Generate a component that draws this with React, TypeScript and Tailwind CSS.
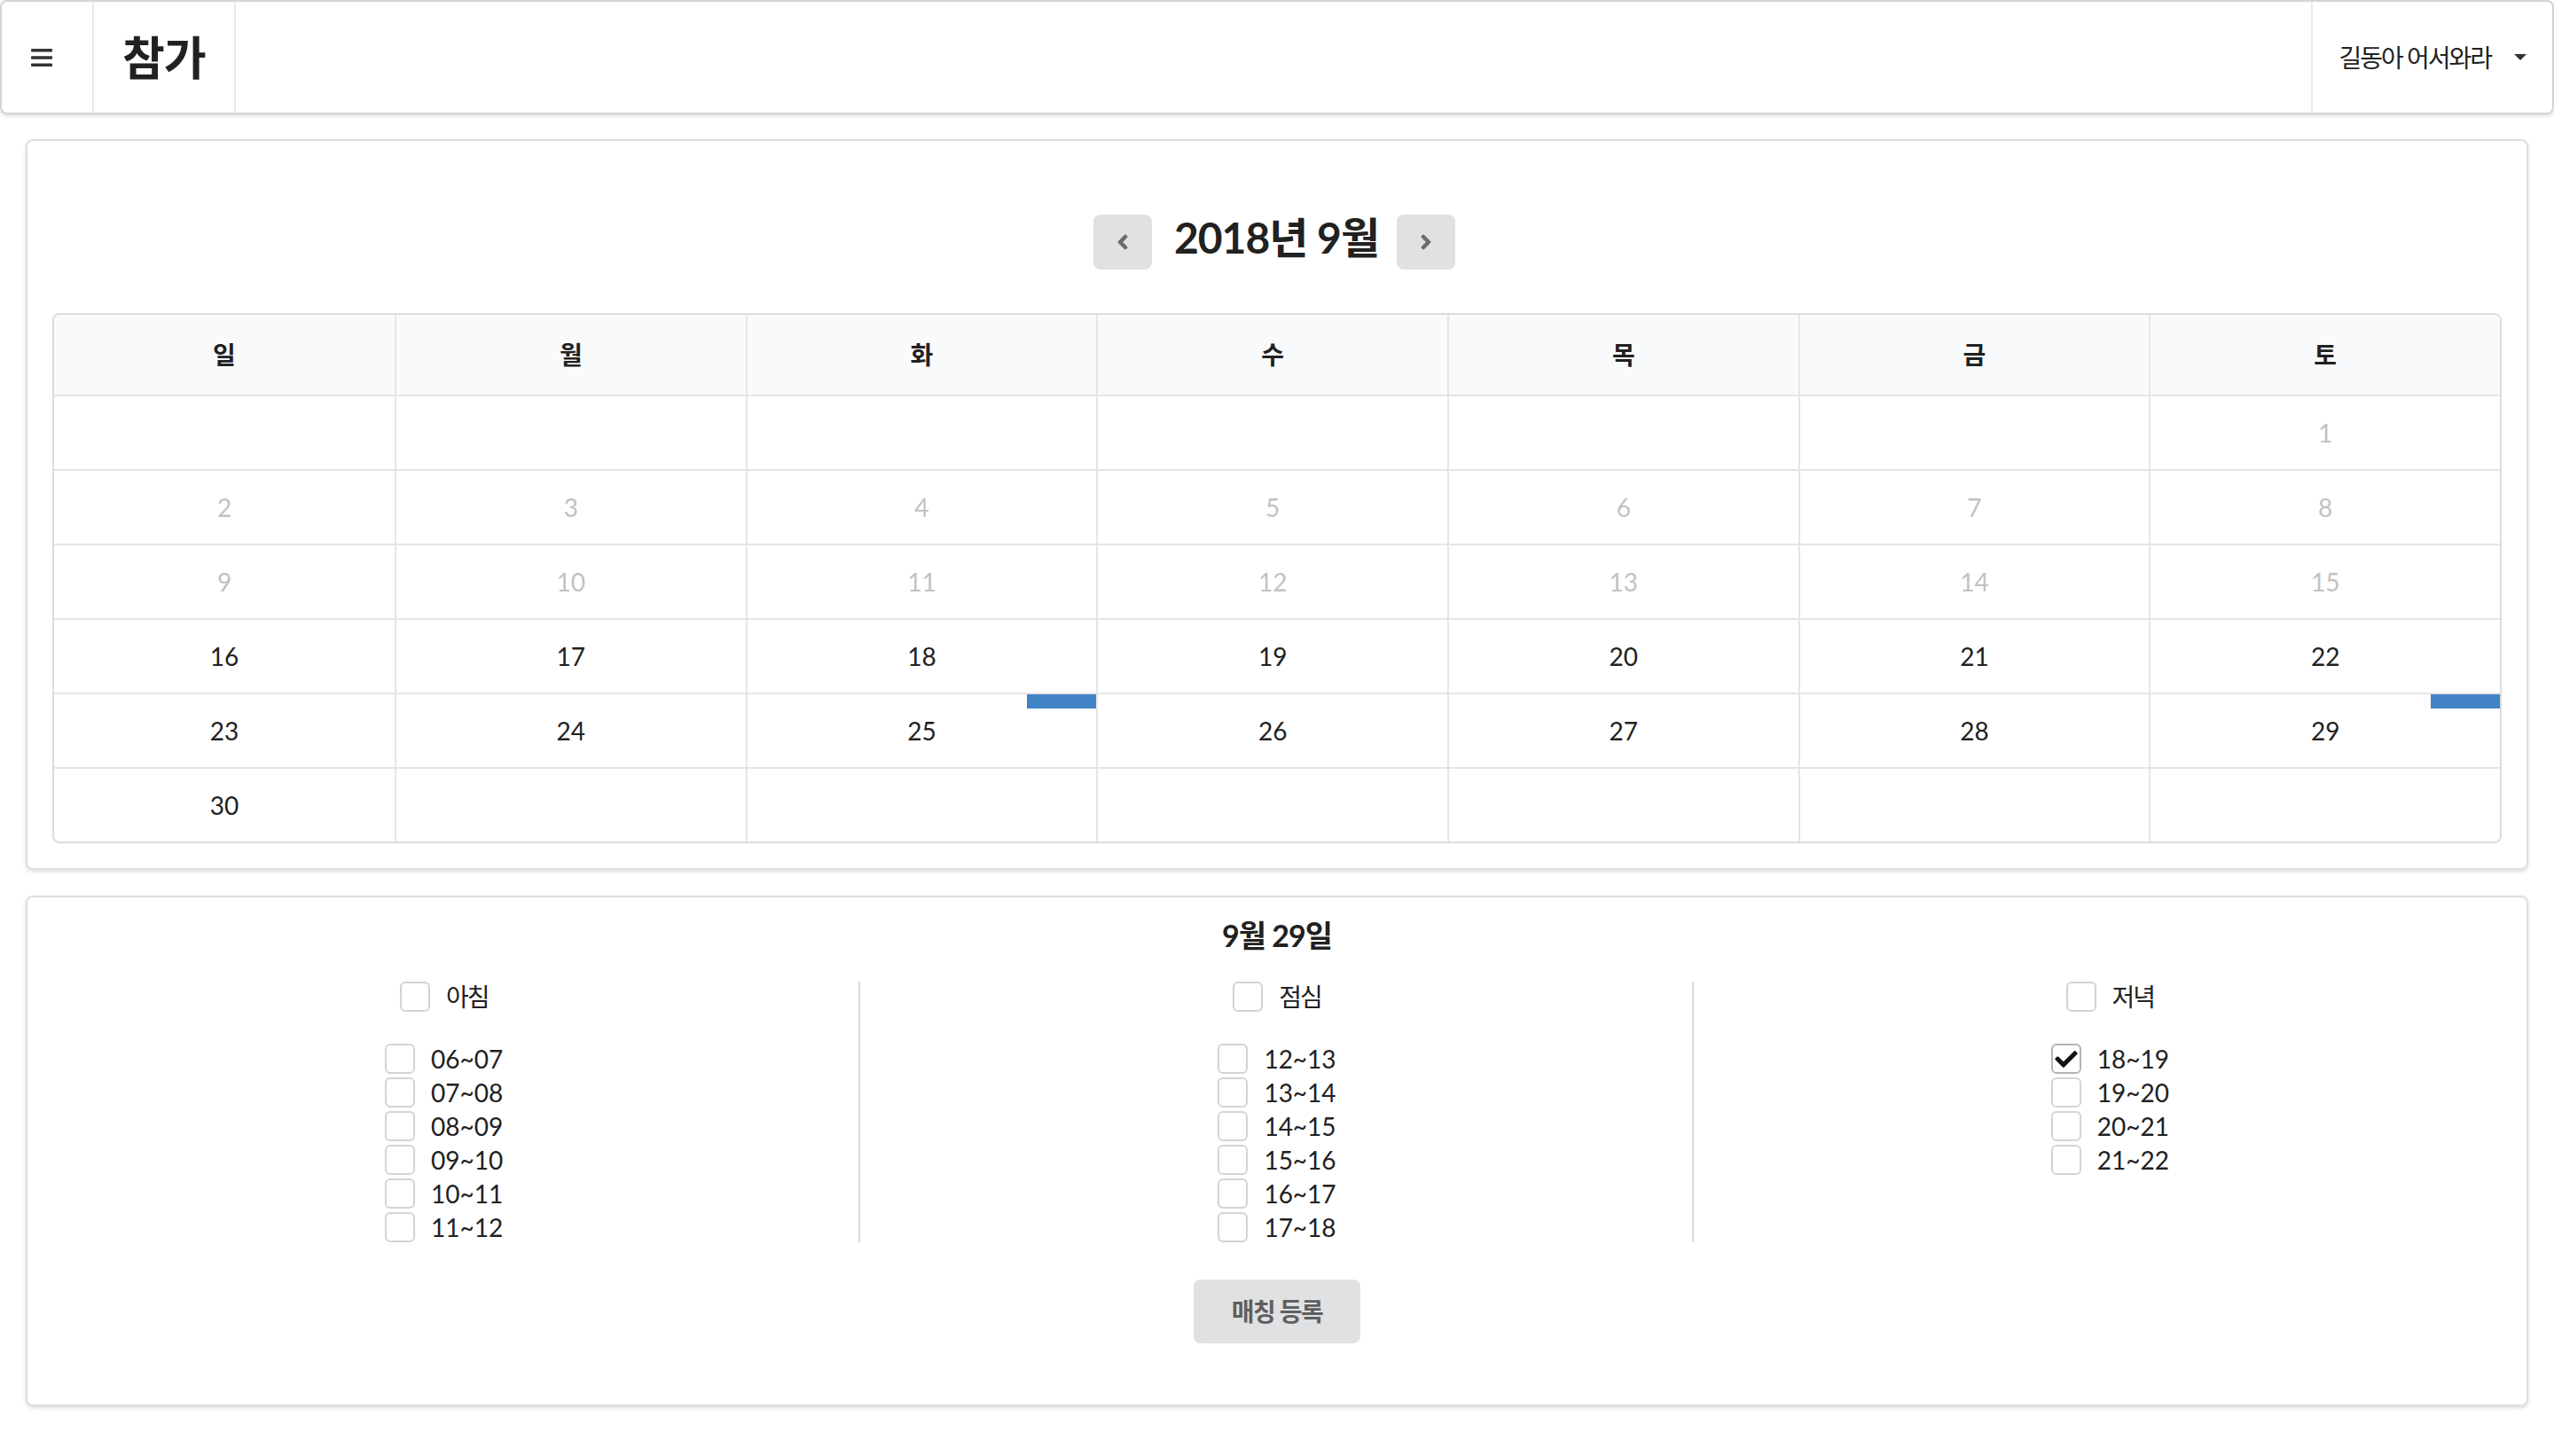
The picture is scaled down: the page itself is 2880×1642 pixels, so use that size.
import React from "react";

const dayNames = ["일", "월", "화", "수", "목", "금", "토"];

const weeks: (number | null)[][] = [
  [null, null, null, null, null, null, 1],
  [2, 3, 4, 5, 6, 7, 8],
  [9, 10, 11, 12, 13, 14, 15],
  [16, 17, 18, 19, 20, 21, 22],
  [23, 24, 25, 26, 27, 28, 29],
  [30, null, null, null, null, null, null],
];

// days that already have a matching
const marked = [25, 29];
const firstOpenDay = 16;

const slots = [
  { title: "아침", times: ["06~07", "07~08", "08~09", "09~10", "10~11", "11~12"] },
  { title: "점심", times: ["12~13", "13~14", "14~15", "15~16", "16~17", "17~18"] },
  { title: "저녁", times: ["18~19", "19~20", "20~21", "21~22"] },
];

const checked = ["18~19"];

function CheckBox({ label, on, korean }: { label: string; on?: boolean; korean?: boolean }) {
  return (
    <label className="flex items-center h-[34px] cursor-pointer">
      <span
        className={`w-[34px] h-[34px] rounded-[6px] border-2 flex items-center justify-center bg-white ${
          on ? "border-[#b4b4b5]" : "border-[#d4d4d5]"
        }`}
      >
        {on && (
          <svg viewBox="0 64 512 384" className="w-[26px] h-[19px]" fill="#111">
            <path d="M173.898 439.404l-166.4-166.4c-9.997-9.997-9.997-26.206 0-36.204l36.203-36.204c9.997-9.998 26.207-9.998 36.204 0L192 312.69 432.095 72.596c9.997-9.997 26.207-9.997 36.204 0l36.203 36.204c9.997 9.997 9.997 26.206 0 36.204l-294.4 294.401c-9.998 9.997-26.207 9.997-36.204-.001z" />
          </svg>
        )}
      </span>
      <span className={`ml-[18px] text-[28px] leading-[34px] text-[#212121] ${korean ? "tracking-[-2px]" : ""}`}>
        {label}
      </span>
    </label>
  );
}

function NavButton({ dir }: { dir: "prev" | "next" }) {
  return (
    <button className="w-[66px] h-[62px] rounded-lg bg-[#e0e1e2] flex items-center justify-center">
      <svg viewBox="0 0 13 18" className="w-[13px] h-[18px]" fill="none" stroke="#6b6b6b" strokeWidth="4.5" strokeLinecap="round" strokeLinejoin="round">
        {dir === "prev" ? <polyline points="10,3 4,9 10,15" /> : <polyline points="3,3 9,9 3,15" />}
      </svg>
    </button>
  );
}

export default function App() {
  return (
    <div className="w-full min-h-screen bg-white font-[Lato,'Noto_Sans_CJK_KR',sans-serif] text-[#212121]">
      {/* top menu */}
      <div className="h-[129px] w-full border-2 border-[#d4d4d5] rounded-lg shadow-[0_2px_4px_0_rgba(34,36,38,0.15)] flex items-stretch">
        <div className="w-[104px] border-r-2 border-[#e9e9ea] flex items-center pl-[33px]">
          <svg viewBox="0 0 24 20" className="w-[24px] h-[20px]" fill="#333">
            <rect x="0" y="0" width="24" height="3.6" rx="1" />
            <rect x="0" y="8.2" width="24" height="3.6" rx="1" />
            <rect x="0" y="16.4" width="24" height="3.6" rx="1" />
          </svg>
        </div>
        <div className="w-[160px] border-r-2 border-[#e9e9ea] flex items-center pl-[32px]">
          <span className="text-[52px] font-bold tracking-[-1px] leading-none">참가</span>
        </div>
        <div className="ml-auto border-l-2 border-[#e9e9ea] flex items-center pl-[30px] pr-[29px]">
          <span className="text-[28px] tracking-[-2px] text-[#222]">길동아 어서와라</span>
          <svg viewBox="0 0 14 7" className="w-[14px] h-[7px] ml-[26px]" fill="#333">
            <polygon points="0,0 14,0 7,7" />
          </svg>
        </div>
      </div>

      <div className="px-[29px] pt-[28px] pb-[40px] flex flex-col gap-[29px]">
        {/* calendar */}
        <div className="border-2 border-[#dedede] rounded-lg shadow-[0_2px_4px_0_rgba(34,36,38,0.15)] p-[28px]">
          <div className="mt-[55px] h-[62px] pr-[6px] flex items-center justify-center">
            <NavButton dir="prev" />
            <h2 className="ml-[25px] mr-[20px] pb-[10px] text-[48px] font-bold tracking-[-1px] leading-none">2018년 9월</h2>
            <NavButton dir="next" />
          </div>

          <div className="mt-[49px] border-2 border-[#dcdcdd] rounded-lg overflow-hidden grid grid-cols-[384px_repeat(6,minmax(0,1fr))]">
            {dayNames.map((d, i) => (
              <div
                key={d}
                className={`h-[90px] bg-[#f9fafb] flex items-center justify-center text-[28px] font-bold ${
                  i > 0 ? "border-l-2 border-[#e5e5e6]" : ""
                }`}
              >
                {d}
              </div>
            ))}
            {weeks.map((week, w) =>
              week.map((day, i) => (
                <div
                  key={`${w}-${i}`}
                  className={`relative h-[84px] border-t-2 border-[#e5e5e6] flex items-center justify-center text-[28px] ${
                    i > 0 ? "border-l-2" : ""
                  } ${day !== null && day < firstOpenDay ? "text-[#c2c2c2]" : "text-[#212121]"}`}
                >
                  {day}
                  {day !== null && marked.includes(day) && (
                    <span className="absolute top-0 right-0 w-[78px] h-[16px] bg-[#4183c4]" />
                  )}
                </div>
              ))
            )}
          </div>
        </div>

        {/* time selection */}
        <div className="border-2 border-[#dedede] rounded-lg shadow-[0_2px_4px_0_rgba(34,36,38,0.15)] p-[28px] flex flex-col items-center">
          <h3 className="text-[34px] font-bold tracking-[-1px] leading-[34px] -mt-[2px]">9월 29일</h3>

          <div className="mt-[35px] w-[calc(100%+56px)] -mx-[28px] grid grid-cols-3">
            {slots.map((s, i) => (
              <div
                key={s.title}
                className={`px-[28px] flex flex-col items-center ${i > 0 ? "shadow-[-2px_0_0_0_#dcdcdd]" : ""}`}
              >
                <CheckBox label={s.title} korean />
                <div className="mt-[36px] flex flex-col gap-[4px]">
                  {s.times.map((t) => (
                    <CheckBox key={t} label={t} on={checked.includes(t)} />
                  ))}
                </div>
              </div>
            ))}
          </div>

          <button className="mt-[42px] mb-[41px] h-[72px] px-[43px] rounded-lg bg-[#e0e1e2] text-[28px] font-bold text-[#5f5f5f] tracking-[-1.5px]">
            매칭 등록
          </button>
        </div>
      </div>
    </div>
  );
}
